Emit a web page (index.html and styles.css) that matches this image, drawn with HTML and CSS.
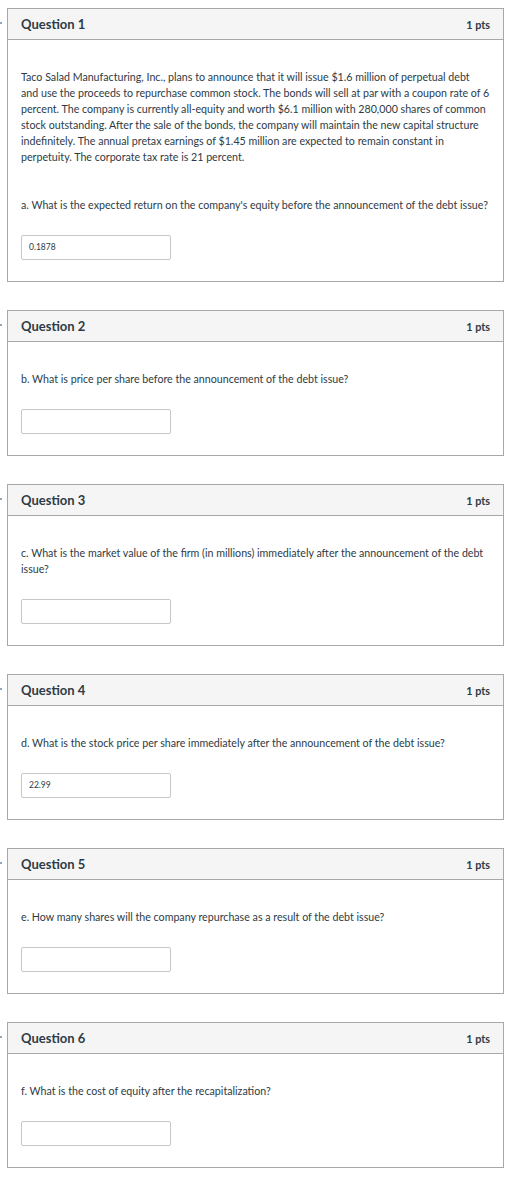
FILE: index.html
```html
<!DOCTYPE html>
<html>
<head>
<meta charset="utf-8">
<link rel="stylesheet" href="styles.css">
</head>
<body>
<div class="page">
  <div class="row">
    <div class="gutter"><span class="mark"></span></div>
    <div class="card">
      <div class="head"><span class="title">Question 1</span><span class="pts">1 pts</span></div>
      <div class="body">
        <p class="q intro">Taco Salad Manufacturing, Inc., plans to announce that it will issue $1.6 million of perpetual debt<br>and use the proceeds to repurchase common stock. The bonds will sell at par with a coupon rate of 6 percent. The company is currently all-equity and worth $6.1 million with 280,000 shares of common stock outstanding. After the sale of the bonds, the company will maintain the new capital structure indefinitely. The annual pretax earnings of $1.45 million are expected to remain constant in perpetuity. The corporate tax rate is 21 percent.</p>
        <p class="q">a. What is the expected return on the company's equity before the announcement of the debt issue?</p>
        <div class="answer">0.1878</div>
      </div>
    </div>
  </div>
  <div class="row">
    <div class="gutter"><span class="mark"></span></div>
    <div class="card">
      <div class="head"><span class="title">Question 2</span><span class="pts">1 pts</span></div>
      <div class="body">
        <p class="q">b. What is price per share before the announcement of the debt issue?</p>
        <div class="answer"></div>
      </div>
    </div>
  </div>
  <div class="row">
    <div class="gutter"><span class="mark"></span></div>
    <div class="card">
      <div class="head"><span class="title">Question 3</span><span class="pts">1 pts</span></div>
      <div class="body">
        <p class="q">c. What is the market value of the firm (in millions) immediately after the announcement of the debt issue?</p>
        <div class="answer"></div>
      </div>
    </div>
  </div>
  <div class="row">
    <div class="gutter"><span class="mark"></span></div>
    <div class="card">
      <div class="head"><span class="title">Question 4</span><span class="pts">1 pts</span></div>
      <div class="body">
        <p class="q">d. What is the stock price per share immediately after the announcement of the debt issue?</p>
        <div class="answer">22.99</div>
      </div>
    </div>
  </div>
  <div class="row">
    <div class="gutter"><span class="mark"></span></div>
    <div class="card">
      <div class="head"><span class="title">Question 5</span><span class="pts">1 pts</span></div>
      <div class="body">
        <p class="q">e. How many shares will the company repurchase as a result of the debt issue?</p>
        <div class="answer"></div>
      </div>
    </div>
  </div>
  <div class="row">
    <div class="gutter"><span class="mark"></span></div>
    <div class="card">
      <div class="head"><span class="title">Question 6</span><span class="pts">1 pts</span></div>
      <div class="body">
        <p class="q">f. What is the cost of equity after the recapitalization?</p>
        <div class="answer"></div>
      </div>
    </div>
  </div>
</div>
</body>
</html>
```

FILE: styles.css
```css
html, body {
  margin: 0;
  padding: 0;
  background: #ffffff;
}
body {
  font-family: Lato, "Liberation Sans", sans-serif;
  color: #2d3b45;
}
.page {
  display: flex;
  flex-direction: column;
  gap: 28px;
  padding: 8px 0 0 0;
  width: 504px;
}
.row {
  display: flex;
}
.gutter {
  width: 7px;
  flex: none;
  position: relative;
}
.mark {
  position: absolute;
  left: 0;
  top: 14px;
  width: 2px;
  height: 2px;
  background: #8fa6bd;
}
.card {
  flex: 1;
  border: 1px solid #a5a9ac;
  display: flex;
  flex-direction: column;
}
.head {
  height: 30px;
  background: #f5f5f5;
  border-bottom: 1px solid #a5a9ac;
  display: flex;
  align-items: center;
  justify-content: space-between;
  padding: 0 13px 0 13px;
}
.title {
  font-weight: 700;
  font-size: 13px;
  margin-top: -1px;
}
.pts {
  font-weight: 700;
  font-size: 10.8px;
}
.body {
  padding: 29px 13px 21px 13px;
}
.q {
  margin: 0;
  font-size: 10.66px;
  line-height: 16px;
}
.q.intro {
  margin-bottom: 32px;
}
.answer {
  margin-top: 22px;
  width: 148px;
  height: 23px;
  border: 1px solid #c4c8cb;
  border-radius: 2px;
  font-size: 8.5px;
  line-height: 23px;
  text-indent: 7px;
  box-sizing: content-box;
}
```
